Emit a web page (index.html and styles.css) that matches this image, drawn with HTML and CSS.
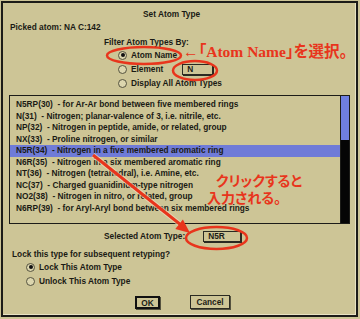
FILE: index.html
```html
<!DOCTYPE html>
<html lang="ja">
<head>
    <meta charset="UTF-8">
    <title>Set Atom Type</title>
    <link rel="stylesheet" href="styles.css">
</head>
<body>

<div class="screen">
    <div class="dialog">
        <div class="title">Set Atom Type</div>
        <div class="picked">Picked atom: NA C:142</div>

        <div class="filter-label">Filter Atom Types By:</div>
        <div class="radios filter">
            <div class="radio"><span class="dot on"></span>Atom Name</div>
            <div class="radio"><span class="dot"></span>Element<span class="field elem">N</span></div>
            <div class="radio"><span class="dot"></span>Display All Atom Types</div>
        </div>

        <div class="listbox">
            <ul class="list">
                <li>N5RP(30) &nbsp;- for Ar-Ar bond between five membered rings</li>
                <li>N(31) &nbsp;- Nitrogen; planar-valence of 3, i.e. nitrile, etc.</li>
                <li>NP(32) &nbsp;- Nitrogen in peptide, amide, or related, group</li>
                <li>NX(33) &nbsp;- Proline nitrogen, or similar</li>
                <li class="picked-row">N5R(34) &nbsp;- Nitrogen in a five membered aromatic ring</li>
                <li>N6R(35) &nbsp;- Nitrogen in a six membered aromatic ring</li>
                <li>NT(36) &nbsp;- Nitrogen (tetrahedral), i.e. Amine, etc.</li>
                <li>NC(37) &nbsp;- Charged guanidinium-type nitrogen</li>
                <li>NO2(38) &nbsp;- Nitrogen in nitro, or related, group</li>
                <li>N6RP(39) &nbsp;- for Aryl-Aryl bond between six membered rings</li>
            </ul>
            <div class="scroll"><div class="thumb"></div></div>
        </div>

        <div class="selected">Selected Atom Type:<span class="field sel">N5R</span></div>

        <div class="lock-label">Lock this type for subsequent retyping?</div>
        <div class="radios lock">
            <div class="radio"><span class="dot on"></span>Lock This Atom Type</div>
            <div class="radio"><span class="dot"></span>Unlock This Atom Type</div>
        </div>

        <div class="buttons">
            <button class="btn default">OK</button>
            <button class="btn">Cancel</button>
        </div>
    </div>

    <!-- red annotations drawn over the dialog -->
    <svg class="marks" width="360" height="319" viewBox="0 0 360 319">
        <ellipse cx="144" cy="55.5" rx="37" ry="8.5" />
        <ellipse cx="195" cy="70.5" rx="22" ry="9.5" />
        <ellipse cx="216.5" cy="238" rx="30.5" ry="11" />
        <line class="halo" x1="93" y1="155" x2="181" y2="225" />
        <line x1="93" y1="155" x2="181" y2="225" />
        <polygon points="190,233 182.9,219.5 175.3,228.9" />
    </svg>
    <div class="note note-name">←「Atom Name」を選択。</div>
    <div class="note note-click">クリックすると</div>
    <div class="note note-input">入力される。</div>
</div>

</body>
</html>
```

FILE: styles.css
```css
body {
    margin: 0;
    padding: 0;
    background: #cdc596;
    font-family: 'Liberation Sans', Arial, sans-serif;
    font-size: 8.3px;
    font-weight: bold;
    color: #1a1a14;
}

.screen {
    position: relative;
    width: 360px;
    height: 319px;
    overflow: hidden;
}

.dialog {
    margin: 1px;
    width: 353px;
    height: 312px;
    border: 2px solid #1c1c18;
    background: #cdc596;
    box-shadow: inset -1px -1px 0 #e8e3c4;
}

.title {
    padding: 5px 0 0 140px;
    line-height: 12px;
}

.picked {
    margin-top: 1px;
    padding-left: 7px;
    line-height: 12px;
}

.filter-label {
    margin-top: 3px;
    padding-left: 101px;
    line-height: 12px;
}

.radios.filter {
    padding-left: 115px;
}

.radio {
    display: flex;
    align-items: center;
    line-height: 14px;
    height: 14px;
}

.dot {
    width: 7px;
    height: 7px;
    border: 1px solid #55533f;
    border-radius: 50%;
    background: #dcd6ae;
    margin-right: 4px;
    display: flex;
    align-items: center;
    justify-content: center;
}

.dot.on::after {
    content: "";
    width: 4px;
    height: 4px;
    border-radius: 50%;
    background: #111;
}

.field {
    display: inline-block;
    height: 9px;
    line-height: 9px;
    border: 1px solid #2a2a22;
    box-shadow: 1px 1px 0 #2a2a22;
    background: #cdc596;
    padding-left: 4px;
}

.field.elem {
    width: 25px;
    margin-left: 19px;
}

.field.sel {
    width: 32px;
    margin-left: 18px;
}

.listbox {
    margin: 5px 0 0 6px;
    width: 341px;
    height: 129px;
    box-sizing: border-box;
    border: 1px solid #1c1c18;
    display: flex;
}

.list {
    flex: 1;
    margin: 0;
    padding: 3px 0 0 0;
    list-style: none;
}

.list li {
    line-height: 11.5px;
    height: 11.5px;
    padding-left: 6px;
    white-space: nowrap;
}

.list li.picked-row {
    background: #6f7bd8;
}

.scroll {
    width: 8px;
    border-left: 1px solid #1c1c18;
    background: #050505;
}

.thumb {
    height: 44px;
    background: #6f7fe0;
}

.selected {
    margin-top: 5px;
    padding-left: 101px;
    line-height: 14px;
    display: flex;
    align-items: center;
}

.lock-label {
    margin-top: 5px;
    padding-left: 9px;
    line-height: 12px;
}

.radios.lock {
    padding-left: 23px;
}

.buttons {
    margin-top: 7px;
    padding-left: 132px;
    display: flex;
    align-items: center;
    gap: 30px;
}

.btn {
    font-family: 'Liberation Sans', Arial, sans-serif;
    font-size: 8.3px;
    font-weight: bold;
    color: #1a1a14;
    background: #cdc596;
    border: 1px solid #2a2a22;
    box-shadow: 1px 1px 0 #55533f;
    padding: 0;
    height: 14px;
    width: 40px;
}

.btn.default {
    width: 25px;
    height: 13px;
    border: 2px solid #111;
}

.marks {
    position: absolute;
    top: 0;
    left: 0;
}

.marks ellipse {
    fill: none;
    stroke: #e8351c;
    stroke-width: 2.5;
}

.marks line {
    stroke: #e8351c;
    stroke-width: 3;
}

.marks line.halo {
    stroke: #f4e6c8;
    stroke-width: 5;
    opacity: 0.6;
}

.marks polygon {
    fill: #e8351c;
}

.note {
    position: absolute;
    color: #e8351c;
    font-family: 'Liberation Serif', 'Noto Sans CJK JP', serif;
    font-weight: bold;
    white-space: nowrap;
    font-feature-settings: "palt";
}

.note-name {
    left: 183px;
    top: 43px;
    font-size: 15.5px;
    line-height: 17px;
}

.note-click {
    left: 216px;
    top: 174px;
    font-size: 14px;
    line-height: 16px;
}

.note-input {
    left: 207px;
    top: 191px;
    font-size: 14px;
    line-height: 16px;
}
```
